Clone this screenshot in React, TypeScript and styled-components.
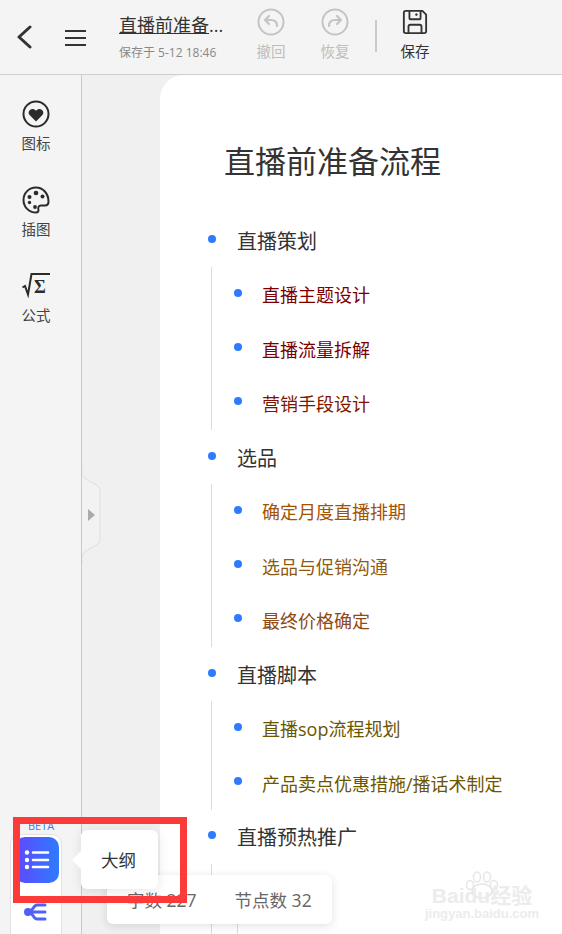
import styled, { createGlobalStyle } from "styled-components";

type OutlineNode = {
  text: string;
  color?: string;
  children?: OutlineNode[];
};

const OUTLINE: OutlineNode[] = [
  {
    text: "直播策划",
    children: [
      { text: "直播主题设计", color: "#7a0000" },
      { text: "直播流量拆解", color: "#7a0000" },
      { text: "营销手段设计", color: "#7f1500" },
    ],
  },
  {
    text: "选品",
    children: [
      { text: "确定月度直播排期", color: "#a35200" },
      { text: "选品与促销沟通", color: "#8f5a10" },
      { text: "最终价格确定", color: "#8f4a14" },
    ],
  },
  {
    text: "直播脚本",
    children: [
      { text: "直播sop流程规划", color: "#6b5600" },
      { text: "产品卖点优惠措施/播话术制定", color: "#6b5600" },
    ],
  },
  {
    text: "直播预热推广",
    // the child row sits behind the status bar, only its branch line shows
    children: [{ text: "", children: [{ text: "" }] }],
  },
];

const GlobalStyle = createGlobalStyle`
  html, body {
    margin: 0;
    padding: 0;
    height: 100%;
    overflow: hidden;
  }

  body {
    font-family: "Open Sans", "Noto Sans CJK SC", sans-serif;
    color: #333;
  }
`;

const OutlineBranch = ({ nodes, nested }: { nodes: OutlineNode[]; nested?: boolean }) => (
  <Branch $nested={nested}>
    {nodes.map((node, index) => (
      <li key={index}>
        <Row>
          <Dot />
          <RowText $nested={nested} $color={node.color}>
            {node.text}
          </RowText>
        </Row>
        {node.children && <OutlineBranch nodes={node.children} nested />}
      </li>
    ))}
  </Branch>
);

export default function App() {
  return (
    <Page>
      <GlobalStyle />
      <Header>
        <IconButton aria-label="返回">
          <svg width="16" height="24" viewBox="0 0 16 24" fill="none">
            <path d="M14 2 3 12l11 10" stroke="#333" strokeWidth="3" strokeLinecap="round" strokeLinejoin="round" />
          </svg>
        </IconButton>
        <MenuButton aria-label="菜单">
          <svg width="21" height="18" viewBox="0 0 21 18" fill="none">
            <path d="M0 2h21M0 9h21M0 16h21" stroke="#333" strokeWidth="2" />
          </svg>
        </MenuButton>
        <DocInfo>
          <DocTitle>
            <u>直播前准备</u>...
          </DocTitle>
          <SavedAt>保存于 5-12 18:46</SavedAt>
        </DocInfo>
        <Actions>
          <Action $disabled>
            <svg width="28" height="28" viewBox="0 0 28 28" fill="none" stroke="#c4c4c4">
              <circle cx="14" cy="14" r="12.5" strokeWidth="2" />
              <path d="M20 18c0-4-2.500-6-6-6H8.500M12 8l-4 4 4 4" strokeWidth="2.200" strokeLinecap="round" strokeLinejoin="round" />
            </svg>
            <ActionLabel>撤回</ActionLabel>
          </Action>
          <Action $disabled>
            <svg width="28" height="28" viewBox="0 0 28 28" fill="none" stroke="#c4c4c4">
              <circle cx="14" cy="14" r="12.5" strokeWidth="2" />
              <path d="M8 18c0-4 2.500-6 6-6h5.500M16 8l4 4-4 4" strokeWidth="2.200" strokeLinecap="round" strokeLinejoin="round" />
            </svg>
            <ActionLabel>恢复</ActionLabel>
          </Action>
          <ActionDivider />
          <Action>
            <SaveIcon width="26" height="26" viewBox="0 0 28 28" fill="none" stroke="#333" strokeWidth="2">
              <path d="M4 2h18l4 4v18a2 2 0 0 1-2 2H4a2 2 0 0 1-2-2V4a2 2 0 0 1 2-2Z" strokeLinejoin="round" />
              <path d="M8 2v8a1 1 0 0 0 1 1h10a1 1 0 0 0 1-1V2M7 26v-7a2 2 0 0 1 2-2h10a2 2 0 0 1 2 2v7" />
              <circle cx="15.500" cy="6" r="1" fill="#333" strokeWidth="0.800" />
            </SaveIcon>
            <ActionLabel>保存</ActionLabel>
          </Action>
        </Actions>
      </Header>

      <Body>
        <Sidebar>
          <SideItem>
            <svg width="28" height="28" viewBox="0 0 28 28" fill="none">
              <circle cx="14" cy="14" r="12.500" stroke="#2b2b2b" strokeWidth="2" />
              <path
                d="M14 21.500 7.600 15c-3.200-3.600 2.600-8.600 6.400-4.200 3.800-4.400 9.600.6 6.400 4.200Z"
                fill="#2b2b2b"
              />
            </svg>
            <SideLabel>图标</SideLabel>
          </SideItem>
          <SideItem>
            <svg width="28" height="28" viewBox="0 0 28 28" fill="none">
              <path
                d="M14 1.500C7 1.500 1.500 7 1.500 14S7 26.500 14 26.500c2 0 2.800-1.300 2.400-2.800-.5-1.900 0-4.200 2.600-4.200h4c2.200 0 3.500-1.500 3.500-4C26.500 7.500 21 1.500 14 1.500Z"
                stroke="#2b2b2b"
                strokeWidth="2"
              />
              <g fill="#2b2b2b">
                <circle cx="14" cy="7" r="2.300" />
                <circle cx="7.500" cy="11" r="2" />
                <circle cx="20.500" cy="10.500" r="2" />
                <circle cx="7.500" cy="16.500" r="1.700" />
                <circle cx="13" cy="21" r="1.900" />
              </g>
            </svg>
            <SideLabel>插图</SideLabel>
          </SideItem>
          <SideItem>
            <svg width="28" height="28" viewBox="0 0 28 28" fill="none">
              <path d="M0.500 15.500 3 14l3 8.500L9.500 2H28" stroke="#2b2b2b" strokeWidth="2" />
              <text x="12" y="21" fontFamily="'Liberation Serif', serif" fontWeight="700" fontSize="18" fill="#2b2b2b">
                Σ
              </text>
            </svg>
            <SideLabel>公式</SideLabel>
          </SideItem>
        </Sidebar>

        <Canvas>
          <Paper>
            <DocHeading>直播前准备流程</DocHeading>
            <OutlineBranch nodes={OUTLINE} />
          </Paper>
        </Canvas>
      </Body>

      <CollapseHandle>
        <svg width="20" height="100" viewBox="0 0 20 100" fill="none">
          <path
            d="M0 0v8c1 5 5 7 11 10 5 2.500 7 4 7 7v50c0 3-2 4.500-7 7-6 3-10 5-11 10v8"
            fill="#f2f2f2"
            stroke="#e2e2e2"
            strokeWidth="1.200"
          />
          <path d="M6 44l7 6-7 6Z" fill="#aaa" />
        </svg>
      </CollapseHandle>

      <BetaLabel>BETA</BetaLabel>
      <ToolPalette>
        <ToolActive>
          <svg width="26" height="22" viewBox="0 0 26 22" fill="none">
            <g fill="#fff">
              <circle cx="3" cy="3.500" r="2.200" />
              <circle cx="3" cy="11" r="2.200" />
              <circle cx="3" cy="18" r="2.200" />
            </g>
            <path d="M9 3.500h15M9 11h15M9 18h15" stroke="#fff" strokeWidth="2.600" strokeLinecap="round" />
          </svg>
        </ToolActive>
        <ToolIdle>
          <svg width="24" height="20" viewBox="0 0 24 20" fill="none" stroke="#4d63f5" strokeWidth="3" strokeLinecap="round">
            <path d="M4 10c5 0 5-7 9-7h8M4 10h17M4 10c5 0 5 7 9 7h8" />
            <circle cx="4" cy="10" r="2.500" fill="#4d63f5" />
          </svg>
        </ToolIdle>
      </ToolPalette>

      <StatusBar>
        <StatusText>字数 227</StatusText>
        <StatusText>节点数 32</StatusText>
      </StatusBar>

      <Tooltip>大纲</Tooltip>
      <Highlight />

      <Watermark>
        <svg width="34" height="28" viewBox="0 0 34 28" fill="none" stroke="#e6e6e6" strokeWidth="1.500">
          <ellipse cx="17" cy="20" rx="10" ry="7" />
          <ellipse cx="5" cy="14" rx="3.500" ry="4.500" />
          <ellipse cx="12" cy="6" rx="3.500" ry="5" />
          <ellipse cx="22" cy="6" rx="3.500" ry="5" />
          <ellipse cx="29" cy="14" rx="3.500" ry="4.500" />
        </svg>
        <WatermarkBrand>Baidu经验</WatermarkBrand>
        <WatermarkUrl>jingyan.baidu.com</WatermarkUrl>
      </Watermark>
    </Page>
  );
}

const Page = styled.div`
  position: relative;
  display: flex;
  flex-direction: column;
  height: 934px;
  overflow: hidden;
  background: #f4f4f4;
`;

const Header = styled.header`
  display: flex;
  align-items: flex-start;
  height: 75px;
  box-sizing: border-box;
  flex-shrink: 0;
  border-bottom: 1px solid #cfcfcf;
  background: #f4f4f4;
`;

const IconButton = styled.div`
  margin: 25px 0 0 16px;
  line-height: 0;
`;

const MenuButton = styled.div`
  margin: 29px 0 0 33px;
  line-height: 0;
`;

const DocInfo = styled.div`
  width: 120px;
  margin-left: 33px;
`;

const DocTitle = styled.div`
  margin-top: 12px;
  font-size: 18px;
  line-height: 26px;
  color: #333;
  white-space: nowrap;
`;

const SavedAt = styled.div`
  margin-top: 7px;
  font-size: 12px;
  line-height: 16px;
  color: #888;
  white-space: nowrap;
`;

const Actions = styled.div`
  display: flex;
  align-items: flex-start;
  margin-left: 17px;
`;

const Action = styled.div<{ $disabled?: boolean }>`
  display: flex;
  flex-direction: column;
  align-items: center;
  gap: 6px;
  width: 30px;
  margin-top: 8px;
  margin-right: 34px;
  color: ${({ $disabled }) => ($disabled ? "#bdbdbd" : "#333")};

  &:last-child {
    margin-right: 0;
  }
`;

const SaveIcon = styled.svg`
  margin: 1px 0;
`;

const ActionLabel = styled.span`
  font-size: 14.500px;
  line-height: 20px;
  white-space: nowrap;
`;

const ActionDivider = styled.div`
  width: 2px;
  height: 32px;
  margin: 20px 23px 0 -9px;
  background: #cacaca;
`;

const Body = styled.div`
  display: flex;
  flex: 1;
  min-height: 0;
`;

const Sidebar = styled.aside`
  display: flex;
  flex-direction: column;
  width: 82px;
  flex-shrink: 0;
  padding-top: 25px;
  box-sizing: border-box;
  border-right: 1px solid #c9c9c9;
  background: #f4f4f4;
`;

const SideItem = styled.div`
  display: flex;
  flex-direction: column;
  align-items: center;
  gap: 6px;
  width: 72px;
  height: 86px;
`;

const SideLabel = styled.span`
  font-size: 14.500px;
  line-height: 20px;
  color: #444;
`;

const Canvas = styled.main`
  flex: 1;
  min-width: 0;
  padding-left: 78px;
  background: #f0f0f0;
`;

const Paper = styled.div`
  height: 100%;
  padding: 60px 0 0 48px;
  box-sizing: border-box;
  overflow: hidden;
  border-top-left-radius: 24px;
  background: #fff;
`;

const DocHeading = styled.h1`
  margin: 0 0 26px 16px;
  font-size: 31px;
  font-weight: 400;
  line-height: 52px;
  color: #333;
`;

const Branch = styled.ul<{ $nested?: boolean }>`
  list-style: none;
  margin: 0;
  padding: 0;

  ${({ $nested }) =>
    $nested &&
    `
    margin-left: 3px;
    padding-left: 22px;
    border-left: 1px solid #dcdcdc;
  `}
`;

const Row = styled.div`
  display: flex;
  align-items: center;
  gap: 21px;
  height: 54.250px;
`;

const Dot = styled.span`
  width: 8px;
  height: 8px;
  flex-shrink: 0;
  margin-top: -3px;
  border-radius: 50%;
  background: #2f7bff;
`;

const RowText = styled.span<{ $nested?: boolean; $color?: string }>`
  margin-left: ${({ $nested }) => ($nested ? "-1px" : "0")};
  font-size: ${({ $nested }) => ($nested ? "18px" : "20px")};
  color: ${({ $color }) => $color ?? "#333"};
  white-space: nowrap;
`;

const CollapseHandle = styled.div`
  position: absolute;
  left: 82px;
  top: 465px;
  line-height: 0;
`;

const BetaLabel = styled.span`
  position: absolute;
  left: 28px;
  top: 819px;
  font-size: 11px;
  line-height: 14px;
  color: #3f7cf5;
`;

const ToolPalette = styled.div`
  position: absolute;
  left: 10px;
  top: 834px;
  width: 52px;
  height: 120px;
  box-sizing: border-box;
  border: 1px solid #e2e2e2;
  border-radius: 10px;
  background: #fff;
`;

const ToolActive = styled.div`
  display: flex;
  align-items: center;
  justify-content: center;
  width: 44px;
  height: 46px;
  margin: 2px 0 0 4px;
  border-radius: 10px;
  background: linear-gradient(90deg, #5f48ff, #2f7bff);
`;

const ToolIdle = styled.div`
  display: flex;
  justify-content: center;
  margin-top: 19px;
  line-height: 0;
`;

const StatusBar = styled.div`
  position: absolute;
  left: 107px;
  top: 875px;
  display: flex;
  align-items: center;
  gap: 38px;
  width: 225px;
  height: 49px;
  padding-left: 20px;
  box-sizing: border-box;
  border-radius: 6px;
  background: #fff;
  box-shadow: 0 2px 10px rgba(0, 0, 0, 0.12);
`;

const StatusText = styled.span`
  font-size: 17.500px;
  color: #666;
  white-space: nowrap;
`;

const Tooltip = styled.div`
  position: absolute;
  left: 81px;
  top: 830px;
  display: flex;
  align-items: center;
  justify-content: center;
  width: 77px;
  height: 59px;
  padding-right: 2px;
  box-sizing: border-box;
  border-radius: 6px;
  font-size: 17.500px;
  color: #333;
  background: #fff;
  box-shadow: 0 2px 12px rgba(0, 0, 0, 0.1);

  &::before {
    content: "";
    position: absolute;
    left: -9px;
    top: 21px;
    border-top: 9px solid transparent;
    border-bottom: 9px solid transparent;
    border-right: 9px solid #fff;
  }
`;

const Highlight = styled.div`
  position: absolute;
  left: 13px;
  top: 817px;
  width: 174px;
  height: 86px;
  box-sizing: border-box;
  border: 7px solid #fb3a3a;
  pointer-events: none;
`;

const Watermark = styled.div`
  position: absolute;
  left: 431px;
  top: 871px;
  display: flex;
  flex-direction: column;
  align-items: center;
  width: 102px;
`;

const WatermarkBrand = styled.div`
  margin-top: -13px;
  font-family: "Liberation Sans", "Noto Sans CJK SC", sans-serif;
  font-size: 21px;
  font-weight: 700;
  line-height: 20px;
  color: #ececec;
  white-space: nowrap;
`;

const WatermarkUrl = styled.div`
  font-family: "Liberation Sans", sans-serif;
  font-size: 13px;
  font-weight: 700;
  line-height: 15px;
  color: #ececec;
  white-space: nowrap;
`;
